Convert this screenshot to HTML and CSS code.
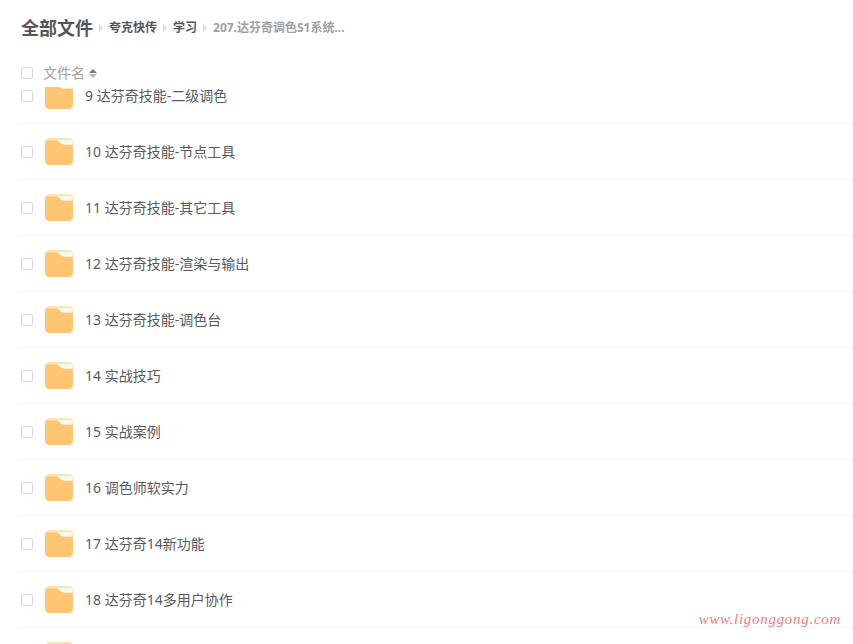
FILE: index.html
```html
<!DOCTYPE html>
<html lang="zh">
<head>
<meta charset="utf-8">
<title>全部文件</title>
<link rel="stylesheet" href="styles.css">
</head>
<body>
<main class="page">
  <header class="crumbs">
    <h1 class="crumb-root">全部文件</h1>
    <span class="sep"></span><span class="crumb">夸克快传</span>
    <span class="sep"></span><span class="crumb">学习</span>
    <span class="sep"></span><span class="crumb crumb-current">207.达芬奇调色S1系统...</span>
  </header>
  <div class="head-row">
    <span class="check"></span>
    <span class="head-label">文件名</span>
    <span class="sort"><i class="up"></i><i class="down"></i></span>
  </div>
  <div class="list">
    <ul class="rows">
      <li class="row"><span class="check"></span><svg class="folder" viewBox="0 0 28 28"><use href="#f"/></svg><span class="name">9 达芬奇技能-二级调色</span></li>
      <li class="row"><span class="check"></span><svg class="folder" viewBox="0 0 28 28"><use href="#f"/></svg><span class="name">10 达芬奇技能-节点工具</span></li>
      <li class="row"><span class="check"></span><svg class="folder" viewBox="0 0 28 28"><use href="#f"/></svg><span class="name">11 达芬奇技能-其它工具</span></li>
      <li class="row"><span class="check"></span><svg class="folder" viewBox="0 0 28 28"><use href="#f"/></svg><span class="name">12 达芬奇技能-渲染与输出</span></li>
      <li class="row"><span class="check"></span><svg class="folder" viewBox="0 0 28 28"><use href="#f"/></svg><span class="name">13 达芬奇技能-调色台</span></li>
      <li class="row"><span class="check"></span><svg class="folder" viewBox="0 0 28 28"><use href="#f"/></svg><span class="name">14 实战技巧</span></li>
      <li class="row"><span class="check"></span><svg class="folder" viewBox="0 0 28 28"><use href="#f"/></svg><span class="name">15 实战案例</span></li>
      <li class="row"><span class="check"></span><svg class="folder" viewBox="0 0 28 28"><use href="#f"/></svg><span class="name">16 调色师软实力</span></li>
      <li class="row"><span class="check"></span><svg class="folder" viewBox="0 0 28 28"><use href="#f"/></svg><span class="name">17 达芬奇14新功能</span></li>
      <li class="row"><span class="check"></span><svg class="folder" viewBox="0 0 28 28"><use href="#f"/></svg><span class="name">18 达芬奇14多用户协作</span></li>
      <li class="row"><span class="check"></span><svg class="folder" viewBox="0 0 28 28"><use href="#f"/></svg><span class="name"></span></li>
    </ul>
  </div>
  <div class="watermark">www.ligonggong.com</div>
</main>
<svg class="defs" width="0" height="0" aria-hidden="true">
  <symbol id="f" viewBox="0 0 28 28">
    <rect x="0" y="0" width="28" height="27" rx="4.5" fill="#ffe2b4"/>
    <path d="M0 6 C0 3.5 1.5 2.5 3.5 2.5 H10.5 C12.5 2.5 13.5 3.5 15 5 C16.5 6.5 18 7 20 7 H28 V22.5 A4.5 4.5 0 0 1 23.5 27 H4.5 A4.5 4.5 0 0 1 0 22.5 Z" fill="#fec673"/>
    <path d="M13 2 H25 C26.3 2 27 3 27 4.5 V6.5 H20.5 C17.5 6.5 15.5 5 13 2 Z" fill="#fffaf2"/>
  </symbol>
</svg>
</body>
</html>
```
FILE: styles.css
```css
* { box-sizing: border-box; }
html, body { margin: 0; height: 100%; overflow: hidden; background: #fff; }
body { font-family: "Noto Sans", "Noto Sans CJK SC", sans-serif; color: #4c4c50; }
.page { position: relative; height: 644px; padding-left: 21px; display: flex; flex-direction: column; overflow: hidden; }
.crumbs { height: 56px; display: flex; align-items: center; flex: none; }
.crumb-root { margin: 0; font-size: 18px; line-height: 24px; font-weight: 700; color: #55555a; }
.crumb { font-size: 12px; font-weight: 700; color: #55555a; line-height: 18px; }
.crumb-current { color: #a0a0a0; }
.sep { width: 0; height: 0; margin: 0 6px 0 6px; border-left: 4px solid #dcdcdc; border-top: 4px solid transparent; border-bottom: 4px solid transparent; }
.head-row { height: 31px; display: flex; align-items: center; flex: none; padding-top: 3px; }
.head-label { margin-left: 10px; font-size: 14px; line-height: 18px; color: #a0a0a0; }
.sort { display: flex; flex-direction: column; gap: 1px; margin-left: 4px; }
.sort i { display: block; width: 0; height: 0; border-left: 4px solid transparent; border-right: 4px solid transparent; }
.sort .up { border-bottom: 4px solid #777; }
.sort .down { border-top: 4px solid #b5b5b5; }
.check { width: 12px; height: 12px; flex: none; border: 1px solid #d9d9d9; border-radius: 2px; background: #fff; }
.list { flex: 1; min-height: 0; overflow: hidden; }
.rows { list-style: none; margin: -19px 0 0; padding: 0; }
.row { height: 56px; display: flex; align-items: center; border-bottom: 1px solid #f4f4f4; }
.folder { width: 28px; height: 28px; margin-left: 12px; flex: none; }
.name { margin-left: 12px; font-size: 14px; line-height: 18px; color: #5a5a5e; white-space: nowrap; }
.defs { position: absolute; }
.watermark { position: absolute; right: 12px; top: 611px; font-family: "Liberation Serif", serif; font-style: italic; font-size: 15px; letter-spacing: 0.7px; color: #f47c80; }
```
